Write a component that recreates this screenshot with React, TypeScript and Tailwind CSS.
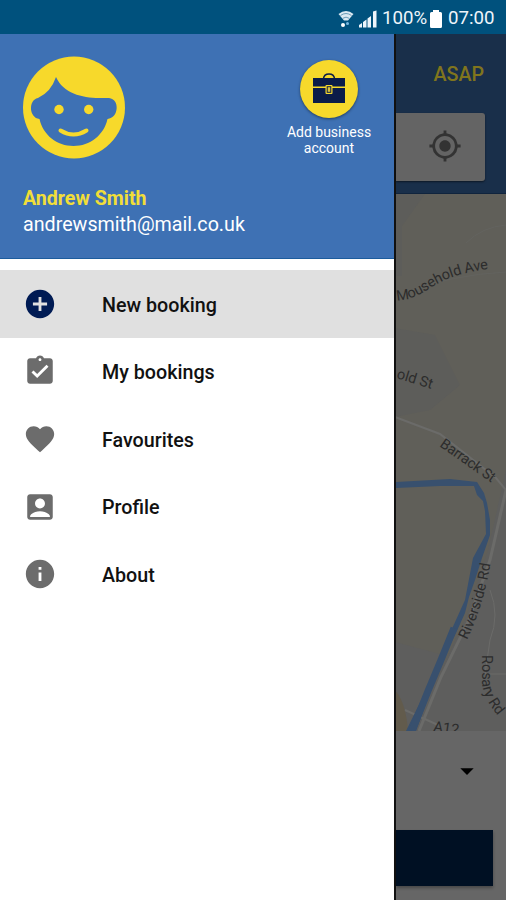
import {
  MdAccountBox,
  MdAddCircle,
  MdArrowDropDown,
  MdAssignmentTurnedIn,
  MdFavorite,
  MdInfo,
  MdMyLocation,
} from 'react-icons/md'

const menuItems = [
  { icon: MdAddCircle, label: 'New booking', active: true },
  { icon: MdAssignmentTurnedIn, label: 'My bookings' },
  { icon: MdFavorite, label: 'Favourites' },
  { icon: MdAccountBox, label: 'Profile' },
  { icon: MdInfo, label: 'About' },
]

export default function App() {
  return (
    <div className="w-[506px] h-[900px] flex flex-col overflow-hidden bg-[#666666] font-['Roboto',sans-serif]">
      <StatusBar />
      <div className="flex-1 flex min-h-0">
        <Drawer />
        <BookingScreen />
      </div>
    </div>
  )
}

function StatusBar() {
  return (
    <header className="h-[34px] shrink-0 bg-[#00517d] text-[#eef5fb] flex items-center justify-end pr-[11px] pt-[3px]">
      <svg className="w-4 h-[18px]" viewBox="0 0 16 18">
        <path d="M0.5 4Q8 -2 15.5 4L10 10.5H6Z" fill="#dce9f2" />
        <path d="M2.5 5.5Q8 1.5 13.5 5.5M4.8 8.3Q8 6 11.2 8.3" fill="none" stroke="#4d87a8" strokeWidth="0.8" />
        <circle cx="5" cy="15" r="2" fill="#fff" />
        <circle cx="9.5" cy="13.5" r="1.5" fill="#77b8df" />
      </svg>
      <svg className="ml-[5px] w-[18px] h-[18px]" viewBox="0 0 18 18" fill="#eef5fb">
        <path d="M0 17.5v-2.5l3-2v4.5zM4 17.5v-5.5l3.5-2.5v8zM8.5 17.5v-9l3.5-2.5v11.5zM14 17.5v-16l3.5-1v17z" />
      </svg>
      <span className="ml-[5px] text-[18.7px] leading-none w-[47px] whitespace-nowrap">100%</span>
      <svg className="ml-[1px] w-[12px] h-[18px]" viewBox="0 0 12 18" fill="#fff">
        <path d="M3 0h6v2h1.5q1.5 0 1.5 1.5V16.5Q12 18 10.5 18H1.5Q0 18 0 16.5V3.5Q0 2 1.5 2H3z" />
      </svg>
      <span className="ml-[6px] text-[18.7px] leading-none w-[47px] whitespace-nowrap">07:00</span>
    </header>
  )
}

function Drawer() {
  return (
    <aside className="w-[396px] shrink-0 bg-white border-r-2 border-[#111]">
      <div className="h-[225px] bg-[#3e71b4] border-b border-[#1c5c9d] pl-[23px] pr-[20px] pt-[22px]">
        <div className="flex justify-between h-[126px]">
          <Avatar />
          <button className="w-[90px] flex flex-col items-center text-white pt-[4px]">
            <BriefcaseBadge />
            <span className="mt-[6px] text-[14px] leading-[16px] text-center whitespace-nowrap">
              Add business
              <br />
              account
            </span>
          </button>
        </div>
        <p className="mt-[5px] text-[19.6px] leading-[24px] font-bold text-[#f1de38]">Andrew Smith</p>
        <p className="mt-[2px] text-[19.7px] leading-[24px] text-white">andrewsmith@mail.co.uk</p>
      </div>
      <nav className="pt-[11px]">
        {menuItems.map(item => (
          <MenuItem key={item.label} item={item} />
        ))}
      </nav>
    </aside>
  )
}

function MenuItem({ item }: { item: (typeof menuItems)[0] }) {
  const Icon = item.icon
  return (
    <a className={`h-[67.6px] flex items-center pl-[23px] ${item.active ? 'bg-[#e0e0e0]' : ''}`}>
      <Icon className={`w-[34px] h-[34px] ${item.active ? 'text-[#001b54]' : 'text-[#6c6c6c]'}`} />
      <span className="ml-[45px] pt-[3px] text-[19.7px] font-medium text-[#111]">{item.label}</span>
    </a>
  )
}

function Avatar() {
  return (
    <svg className="w-[102px] h-[103px] shrink-0" viewBox="23 56 102 103">
      <circle cx="74" cy="107.5" r="51" fill="#f7d92b" />
      <path
        d="M56 77Q51 92 38 98C28 100 29 118 39.5 119C43 135 57 146 73.5 146C90 146 104 135 107.5 119C119 118 120 99 109 98H99C82 98 63 93 56 77Z"
        fill="#3e71b4"
      />
      <circle cx="59" cy="109.5" r="4.7" fill="#f7d92b" />
      <circle cx="88.7" cy="109.5" r="4.7" fill="#f7d92b" />
      <path d="M60.5 130.5Q73.5 138.5 86.5 130.5" fill="none" stroke="#f7d92b" strokeWidth="4" strokeLinecap="round" />
    </svg>
  )
}

function BriefcaseBadge() {
  return (
    <div className="w-[58px] h-[58px] rounded-full bg-[#f7d92b] shadow-[0_1px_3px_rgba(0,0,0,0.45)] flex items-center justify-center">
      <svg className="w-8 h-[30px] mb-[3px]" viewBox="0 0 32 30">
        <path d="M10.5 5.5Q11 1 16 1T21.5 5.5" fill="none" stroke="#0b1c49" strokeWidth="1.5" />
        <path d="M0 5h32v8.5H0zM0 15h32v15H0z" fill="#0b1c49" />
        <rect x="12.5" y="12" width="7" height="9" rx="1" fill="#f7d92b" />
        <rect x="13.7" y="13.2" width="4.6" height="6.6" fill="#0b1c49" />
        <rect x="14.7" y="14.2" width="2.6" height="4.6" fill="#d9c23a" />
      </svg>
    </div>
  )
}

// The booking page, dimmed behind the open drawer
function BookingScreen() {
  return (
    <main className="flex-1 min-w-0 flex flex-col bg-[#666666]">
      <div className="h-[160px] shrink-0 bg-[#192f4a] border-b border-[#10243d]">
        <p className="h-[79px] pt-[29px] pr-[22px] text-right text-[19.7px] leading-[24px] font-medium text-[#80751d]">
          ASAP
        </p>
        <div className="w-[89px] h-[68px] rounded-r-[3px] bg-[#646464] shadow-[0_1px_2px_rgba(0,0,0,0.5)] flex items-center pl-[32px] pb-[2px]">
          <MdMyLocation className="w-[34px] h-[34px] text-[#333]" />
        </div>
      </div>
      <Map />
      <div className="flex-1 flex flex-col">
        <div className="h-[99px] flex items-center pl-[55px] pb-[19px]">
          <MdArrowDropDown className="w-8 h-8 text-black" />
        </div>
        <div className="w-[97px] h-[56px] bg-[#001023] shadow-[0_2px_3px_rgba(0,0,0,0.3)]" />
      </div>
    </main>
  )
}

function Map() {
  return (
    <svg className="w-[110px] h-[537px] shrink-0" viewBox="396 194 110 537">
      <rect x="395" y="194" width="111" height="537" fill="#605f59" />
      <path d="M395 194H425L402 226V276H395zM395 328L435 335L460 385L430 410L395 417z" fill="#5d5d5a" />
      <path d="M506 470L488 550L465 620L412 731H506zM395 642L440 654L408 731H395z" fill="#5e5e5d" />
      <path d="M395 690Q406 703 408 731H395z" fill="#625b4c" />
      <g fill="none" stroke="#6b6b69" strokeWidth="2">
        <path d="M395 417L440 434L496 478L506 490" />
        <path d="M506 490L490 560L468 622L441 677L419 731" strokeWidth="3" />
        <path d="M405 710L438 725" />
        <path d="M490 590Q500 615 490 640L485 674H506" strokeWidth="1" />
        <path d="M466 243Q482 227 506 225M408 292Q450 275 506 272" stroke="#63635f" strokeWidth="1" />
      </g>
      <path
        d="M395 488L396 482L450 479L477 482L484 493L487 503L490 520V535L482 558L475 580L469 597L465 613L456 633L441 663L416 731L405 733L439 664L451 639V631L465 600L473 558L486 534L485 511L483 501L477 495L474 486L440 486Z"
        fill="#38506e"
      />
      <path d="M454 628L441 660L428 691L412 731" fill="none" stroke="#38506e" strokeWidth="7" />
      <defs>
        <path id="mousehold" d="M397 300Q409 302 432 287T497 268" />
        <path id="rosary" d="M482 655V680Q482 700 503 721" />
        <path id="riverside" d="M467 640Q487 598 492 550" />
      </defs>
      <g fill="#2c2c2c" fontSize="14.5" fontFamily="Roboto, sans-serif">
        <text textLength="98"><textPath href="#mousehold">Mousehold Ave</textPath></text>
        <text transform="translate(396 378) rotate(17)">old St</text>
        <text transform="translate(439 446) rotate(35)" textLength="64">Barrack St</text>
        <text textLength="80"><textPath href="#riverside">Riverside Rd</textPath></text>
        <text textLength="65"><textPath href="#rosary">Rosary Rd</textPath></text>
        <text transform="translate(433 731) rotate(8)">A12</text>
      </g>
    </svg>
  )
}
